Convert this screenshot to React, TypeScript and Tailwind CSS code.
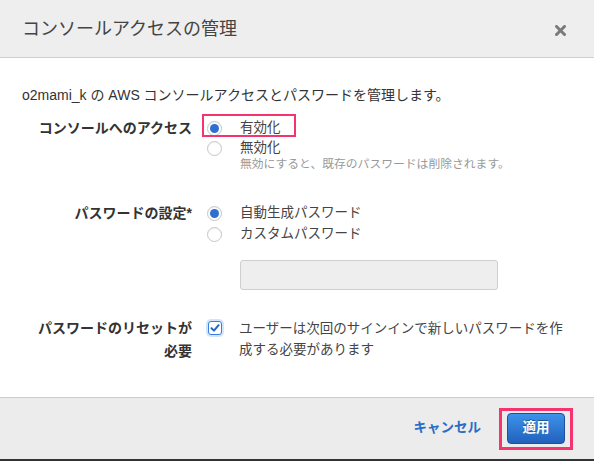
import type React from "react";

const font = {
  fontFamily: '"Liberation Sans", "Noto Sans CJK JP", sans-serif',
} as React.CSSProperties;

function Radio(props: { checked?: boolean }) {
  return (
    <span className="w-[15px] h-[15px] rounded-full border border-[#c6c6c6] bg-white flex items-center justify-center shrink-0 shadow-[inset_0_1px_1px_rgba(0,0,0,0.06)]">
      {props.checked && <span className="w-[9px] h-[9px] rounded-full bg-[#2f6fd0]"></span>}
    </span>
  );
}

export default function App() {
  return (
    <div className="w-[594px] h-[461px] bg-[#333] overflow-hidden" style={font}>
      <div className="h-[459px] flex flex-col bg-white">
        {/* header */}
        <div className="h-[58px] shrink-0 bg-[#eeeeee] border-b border-[#cfcfcf] flex items-center justify-between pl-[22px] pr-[28px]">
          <div className="text-[18px] text-[#444] pt-px">コンソールアクセスの管理</div>
          <svg className="w-[11px] h-[11px] mt-[3px]" viewBox="0 0 11 11" aria-hidden="true">
            <path d="M1.5 1.5 L9.5 9.5 M9.5 1.5 L1.5 9.5" stroke="#7a7a7a" strokeWidth="3" strokeLinecap="square" />
          </svg>
        </div>

        {/* body */}
        <div className="h-[339px] shrink-0 px-[22px] pt-[27px] text-[#444] text-[13.5px]">
          <div className="leading-5 text-[#333] text-[14px]">o2mami_k の AWS コンソールアクセスとパスワードを管理します。</div>

          <div className="flex mt-[13px]">
            <div className="w-[170px] shrink-0 text-right font-bold text-[#333] text-[14px] leading-5">コンソールへのアクセス</div>
            <div className="pl-[15px]">
              <div className="relative h-5 flex items-center">
                <Radio checked />
                <span className="ml-[18px]">有効化</span>
                <span className="absolute left-[-5px] top-[-4px] w-[94px] h-[23px] border-2 border-[#f4336f]"></span>
              </div>
              <div className="h-5 flex items-center">
                <Radio />
                <span className="ml-[18px]">無効化</span>
              </div>
              <div className="pl-[33px] -mt-[2px] text-[11.8px] leading-4 text-[#999]">
                無効にすると、既存のパスワードは削除されます。
              </div>
            </div>
          </div>

          <div className="flex mt-[31px]">
            <div className="w-[170px] shrink-0 text-right font-bold text-[#333] text-[14px] leading-[21px]">パスワードの設定*</div>
            <div className="pl-[15px]">
              <div className="h-[21px] flex items-center">
                <Radio checked />
                <span className="ml-[18px]">自動生成パスワード</span>
              </div>
              <div className="h-[21px] flex items-center">
                <Radio />
                <span className="ml-[18px]">カスタムパスワード</span>
              </div>
              <div className="ml-[33px] mt-[15px] w-[258px] h-[30px] rounded-[3px] border border-[#cfcfcf] bg-[#eeeeee]"></div>
            </div>
          </div>

          <div className="flex mt-[27px]">
            <div className="w-[170px] shrink-0 text-right font-bold text-[#333] text-[14px] leading-[23px]">
              パスワードのリセットが
              <br />
              必要
            </div>
            <div className="pl-[16px] flex">
              <span className="mt-[4px] w-[14px] h-[14px] shrink-0 rounded-[3px] border border-[#3b7ddd] bg-white flex items-center justify-center shadow-[0_0_0_2px_rgba(80,150,240,0.25)]">
                <svg className="w-[10px] h-[10px]" viewBox="0 0 10 10" aria-hidden="true">
                  <path d="M1.5 5.2 L4 7.6 L8.6 2.2" fill="none" stroke="#2466c8" strokeWidth="2" strokeLinecap="round" strokeLinejoin="round" />
                </svg>
              </span>
              <div className="ml-[17px] w-[334px] leading-[21px] mt-[1px]">
                ユーザーは次回のサインインで新しいパスワードを作成する必要があります
              </div>
            </div>
          </div>
        </div>

        {/* footer */}
        <div className="flex-1 bg-[#ececec] border-t border-[#cccccc] flex items-center justify-end pr-[29px] gap-[26px]">
          <button className="text-[#2a6dc6] font-bold text-[13.5px] cursor-pointer">キャンセル</button>
          <div className="relative">
            <button className="w-[58px] h-[31px] rounded-[4px] border border-[#1d4f9e] bg-gradient-to-b from-[#3d92ea] to-[#2261bd] text-white font-bold text-[13.5px] [text-shadow:0_-1px_0_rgba(0,0,0,0.35)] cursor-pointer">
              適用
            </button>
            <span className="absolute left-[-8px] right-[-8px] top-[-5px] bottom-[-6px] border-[3px] border-[#f4336f]"></span>
          </div>
        </div>
      </div>
    </div>
  );
}
